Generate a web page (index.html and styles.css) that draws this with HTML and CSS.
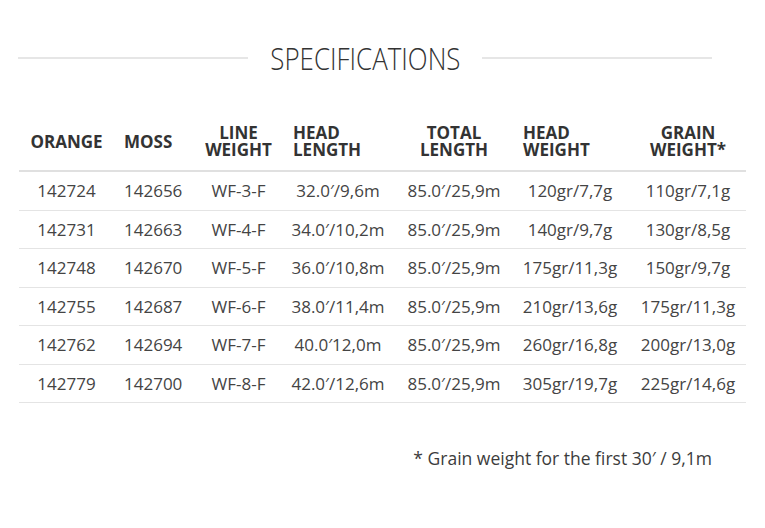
FILE: index.html
```html
<!DOCTYPE html>
<html>
<head>
<meta charset="utf-8">
<link rel="stylesheet" href="styles.css">
</head>
<body>
<div class="page">
  <div class="title-row">
    <span class="rule"></span>
    <h2 class="title">SPECIFICATIONS</h2>
    <span class="rule"></span>
  </div>
  <table class="specs">
    <colgroup>
      <col class="c1"><col class="c2"><col class="c3"><col class="c4"><col class="c5"><col class="c6"><col class="c7">
    </colgroup>
    <thead>
      <tr>
        <th class="ctr">ORANGE</th>
        <th class="left l2">MOSS</th>
        <th class="ctr">LINE<br>WEIGHT</th>
        <th class="left l4">HEAD<br>LENGTH</th>
        <th class="ctr">TOTAL<br>LENGTH</th>
        <th class="left l6">HEAD<br>WEIGHT</th>
        <th class="ctr last">GRAIN<br>WEIGHT*</th>
      </tr>
    </thead>
    <tbody>
      <tr><td>142724</td><td class="left l2">142656</td><td>WF-3-F</td><td>32.0′/9,6m</td><td>85.0′/25,9m</td><td>120gr/7,7g</td><td class="last">110gr/7,1g</td></tr>
      <tr><td>142731</td><td class="left l2">142663</td><td>WF-4-F</td><td>34.0′/10,2m</td><td>85.0′/25,9m</td><td>140gr/9,7g</td><td class="last">130gr/8,5g</td></tr>
      <tr><td>142748</td><td class="left l2">142670</td><td>WF-5-F</td><td>36.0′/10,8m</td><td>85.0′/25,9m</td><td>175gr/11,3g</td><td class="last">150gr/9,7g</td></tr>
      <tr><td>142755</td><td class="left l2">142687</td><td>WF-6-F</td><td>38.0′/11,4m</td><td>85.0′/25,9m</td><td>210gr/13,6g</td><td class="last">175gr/11,3g</td></tr>
      <tr><td>142762</td><td class="left l2">142694</td><td>WF-7-F</td><td>40.0′12,0m</td><td>85.0′/25,9m</td><td>260gr/16,8g</td><td class="last">200gr/13,0g</td></tr>
      <tr><td>142779</td><td class="left l2">142700</td><td>WF-8-F</td><td>42.0′/12,6m</td><td>85.0′/25,9m</td><td>305gr/19,7g</td><td class="last">225gr/14,6g</td></tr>
    </tbody>
  </table>
  <p class="note">* Grain weight for the first 30′ / 9,1m</p>
</div>
</body>
</html>
```

FILE: styles.css
```css
html, body {
  margin: 0;
  padding: 0;
  background: #ffffff;
}

body {
  font-family: "Open Sans", "Liberation Sans", sans-serif;
  color: #3c3c3c;
}

.page {
  width: 765px;
  padding-top: 40px;
}

.title-row {
  display: flex;
  align-items: center;
  justify-content: center;
  width: 694px;
  margin-left: 18px;
}

.rule {
  flex: 1;
  height: 2px;
  background: #e6e6e6;
}

.title {
  margin: 0;
  font-weight: 300;
  font-size: 32px;
  line-height: 36px;
  color: #333333;
  transform: scaleX(0.81);
  letter-spacing: 0;
}

.specs {
  margin-top: 37px;
  margin-left: 19px;
  width: 727px;
  table-layout: fixed;
  border-collapse: collapse;
}

.c1 { width: 95px; }
.c2 { width: 79px; }
.c3 { width: 91px; }
.c4 { width: 108px; }
.c5 { width: 124px; }
.c6 { width: 108px; }
.c7 { width: 122px; }

.specs th {
  font-weight: 700;
  font-size: 17px;
  line-height: 17px;
  color: #333333;
  padding: 11px 0 12px 0;
  border-bottom: 2px solid #e0e0e0;
  vertical-align: middle;
  white-space: nowrap;
}

.specs td {
  font-size: 17px;
  height: 37.5px;
  padding: 0;
  text-align: center;
  border-bottom: 1px solid #e4e4e4;
  vertical-align: middle;
  white-space: nowrap;
  color: #444444;
}

.ctr { text-align: center; }
.specs .left { text-align: left; }
.l2 { padding-left: 10px !important; }
.l4 { padding-left: 9px !important; }
.l6 { padding-left: 7px !important; }
.specs .last { padding-left: 6px; }

.note {
  margin: 43px 0 0 0;
  width: 712px;
  text-align: right;
  font-size: 17.5px;
  color: #3c3c3c;
}
```
